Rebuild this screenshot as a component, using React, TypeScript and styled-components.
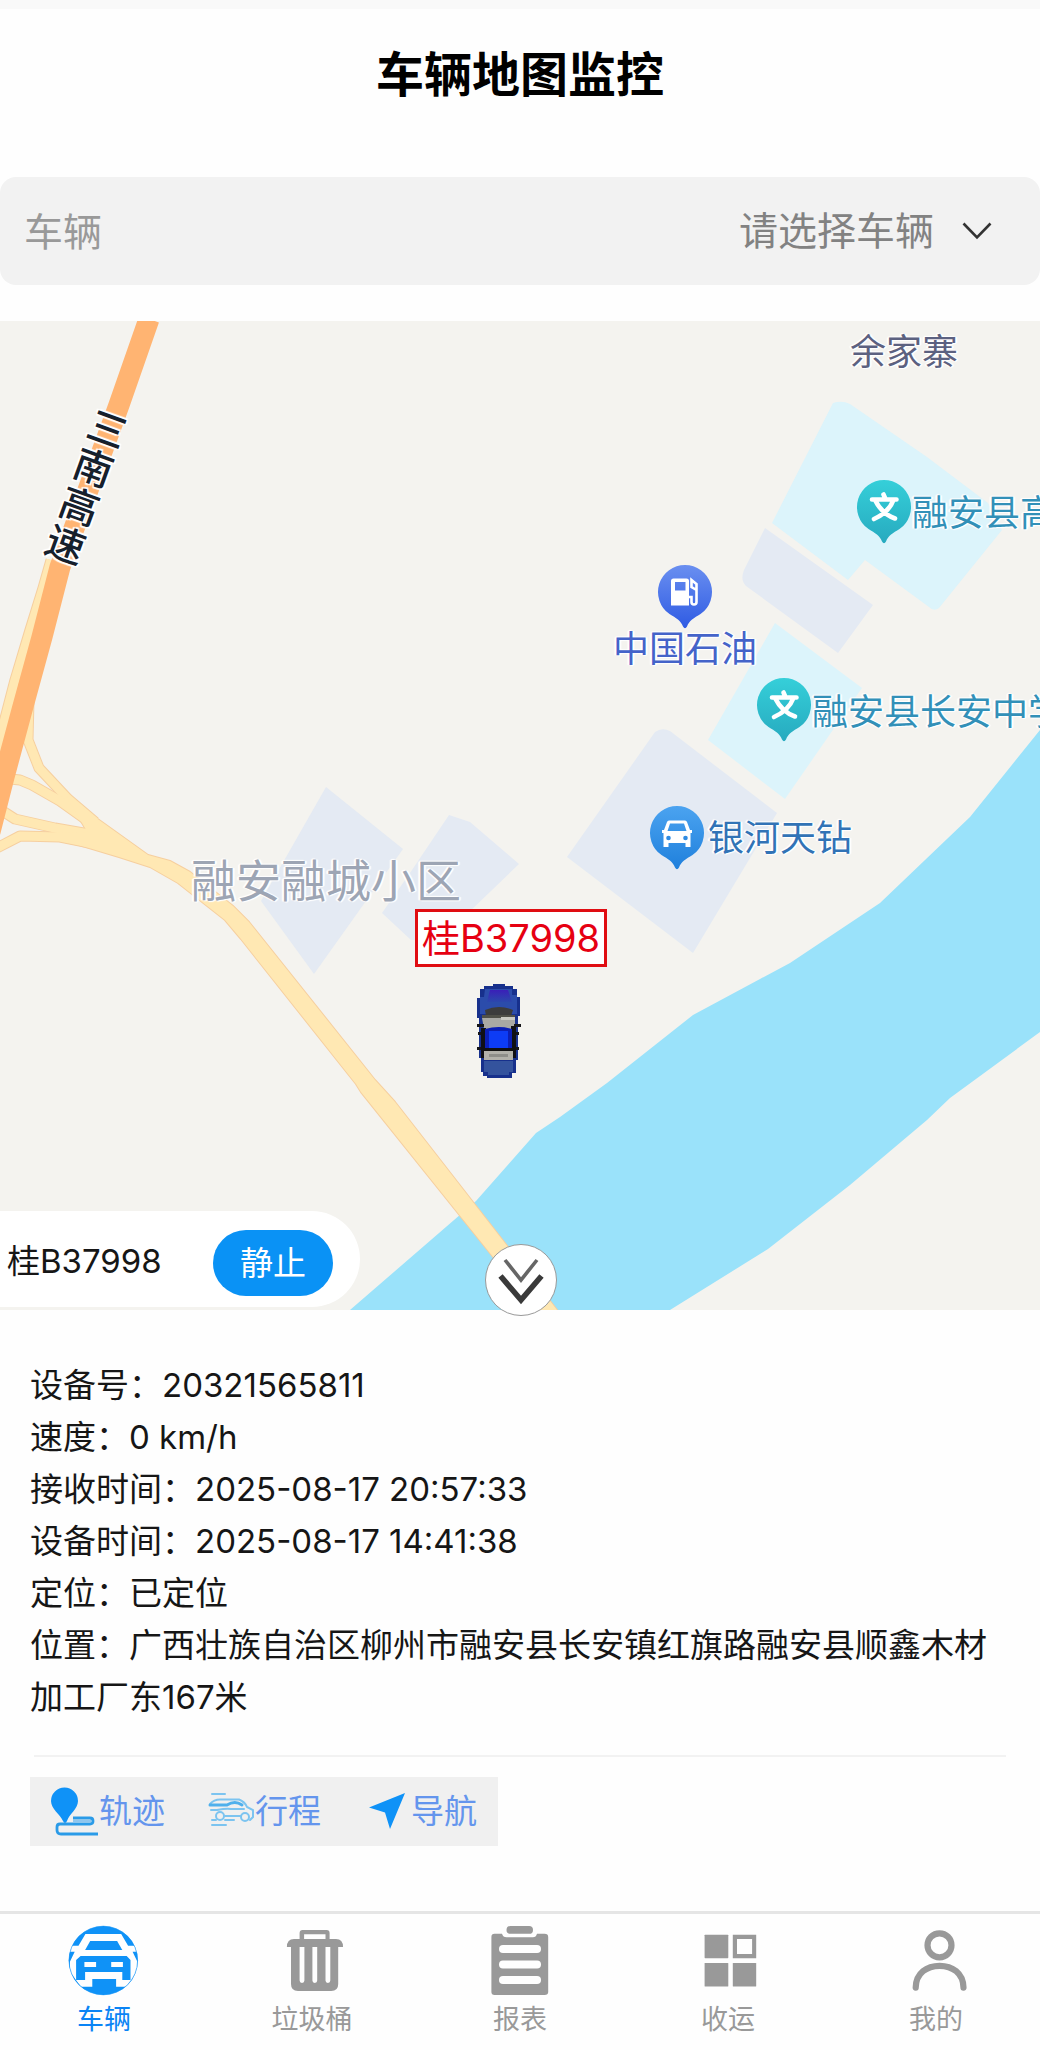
import React from 'react';
import styled, { createGlobalStyle } from 'styled-components';

const GlobalStyle = createGlobalStyle`
  *, *::before, *::after { box-sizing: border-box; }
  body {
    margin: 0;
    background: #fefefe;
    color: #161616;
    font-family: Inter, 'Noto Sans CJK SC', sans-serif;
  }
  button, select { font-family: inherit; }
`;

/* ---------- page ---------- */

const Page = styled.div`
  display: flex;
  flex-direction: column;
  min-height: 100vh;
  overflow-x: hidden;
`;

const Header = styled.header`
  display: flex;
  justify-content: center;
  padding: 30px 0 66px;
  border-top: 9px solid #f9f9f9;
`;

const Title = styled.h1`
  margin: 0;
  font-size: 48px;
  line-height: 72px;
  font-weight: 700;
  color: #000;
`;

const Field = styled.div`
  display: flex;
  align-items: center;
  height: 108px;
  padding: 0 48px 0 24px;
  border-radius: 16px;
  background: #f2f2f2;
  font-size: 39px;
`;

const FieldLabel = styled.label`
  flex: 1;
  padding-bottom: 4px;
  color: #999;
`;

const VehicleSelect = styled.select`
  appearance: none;
  margin: 0 27px 0 0;
  padding: 0;
  border: 0;
  outline: 0;
  background: none;
  color: #828282;
  font-size: 39px;
  line-height: 60px;
`;

/* ---------- map ---------- */

const MAP_W = 1040;
const MAP_H = 989;

const MapArea = styled.section`
  position: relative;
  margin-top: 36px;
  aspect-ratio: ${MAP_W} / ${MAP_H};
`;

const MapCanvas = styled.div`
  position: absolute;
  inset: 0;
  overflow: hidden;
  background: #f4f3ef;
`;

const Terrain = styled.svg`
  display: block;
  width: 100%;
  height: 100%;
`;

const Place = styled.div<{ $x: number; $y: number }>`
  position: absolute;
  left: ${p => (p.$x / MAP_W) * 100}%;
  top: ${p => (p.$y / MAP_H) * 100}%;
`;

const PlaceName = styled.span<{ $color: string; $size?: number }>`
  display: block;
  font-size: ${p => p.$size ?? 36}px;
  line-height: 48px;
  white-space: nowrap;
  color: ${p => p.$color};
  text-shadow: 0 0 2px #fff, 1px 1px 1px #fff, -1px -1px 1px #fff, 2px 0 1px #fff, -2px 0 1px #fff;
`;

const RoadName = styled.div`
  display: flex;
  flex-direction: column;
  width: 40px;
  font-size: 39px;
  font-weight: 500;
  line-height: 41px;
  color: #16202c;
  text-shadow: 0 0 2px #fff, 2px 1px 1px #fff, -2px -1px 1px #fff, 1px -2px 1px #fff, -1px 2px 1px #fff;
  transform: rotate(20deg);
`;

const Plate = styled.div`
  padding: 0 4px;
  border: 3px solid #e00d12;
  background: #fff;
  color: #e60012;
  font-size: 38px;
  line-height: 52px;
  white-space: nowrap;
`;

const StatusPanel = styled.div`
  position: absolute;
  left: 0;
  bottom: 3px;
  display: flex;
  align-items: center;
  justify-content: space-between;
  width: 360px;
  height: 96px;
  padding: 0 27px 0 7px;
  border-radius: 0 48px 48px 0;
  background: #fff;
  font-size: 33px;
`;

const StatusButton = styled.button`
  width: 120px;
  height: 66px;
  margin-top: 8px;
  padding: 0 0 4px;
  border: 0;
  border-radius: 33px;
  background: #0a92f5;
  color: #fff;
  font-size: 33px;
`;

const CollapseButton = styled.button`
  position: absolute;
  left: 50%;
  bottom: -6px;
  display: block;
  width: 72px;
  height: 72px;
  margin-left: -35px;
  padding: 0;
  border: 1px solid #999;
  border-radius: 50%;
  background: #fff;
`;

/* ---------- details ---------- */

const Details = styled.section`
  padding: 49px 30px 65px;
`;

const InfoLine = styled.p`
  margin: 0;
  font-size: 33px;
  line-height: 52px;
`;

const Divider = styled.hr`
  height: 2px;
  margin: 32px 4px 20px;
  border: 0;
  background: #f2f2f2;
`;

const Actions = styled.div`
  display: inline-flex;
  vertical-align: top;
  background: #f0f0f0;
`;

const ActionButton = styled.button`
  display: flex;
  align-items: center;
  justify-content: center;
  width: 156px;
  height: 69px;
  padding: 0;
  border: 0;
  background: none;
  color: #6495ed;
  font-size: 33px;
  line-height: 48px;
  white-space: nowrap;
`;

const ActionText = styled.span`
  padding-bottom: 2px;
`;

/* ---------- tab bar ---------- */

const TabBar = styled.nav`
  display: grid;
  grid-template-columns: repeat(5, 1fr);
  margin-top: auto;
  padding: 11px 0 9px;
  border-top: 3px solid #e5e5e5;
`;

const Tab = styled.a<{ $active?: boolean }>`
  display: flex;
  flex-direction: column;
  align-items: center;
  gap: 2px;
  color: ${p => (p.$active ? '#0a84f5' : '#999')};
  font-size: 27px;
  line-height: 42px;
  text-decoration: none;
`;

/* ---------- drawings ---------- */

const BLUE = '#0f92f7';

const Chevron = () => (
  <svg width="30" height="18" viewBox="0 0 30 18" fill="none" aria-hidden="true">
    <path d="M1.5 1.5 15 15.500 28.500 1.500" stroke="#333" strokeWidth="2.600" />
  </svg>
);

const DoubleChevron = () => (
  <svg width="70" height="70" viewBox="0 0 70 70" fill="none" style={{ display: 'block' }} aria-hidden="true">
    <path d="M19 15 35 35 51 15" stroke="#666" strokeWidth="3.600" />
    <path d="M14.500 31 35 55 55.500 31" stroke="#3a3a3a" strokeWidth="5.600" />
  </svg>
);

type PinKind = 'school' | 'gas' | 'car';

const pinColors: Record<PinKind, [string, string]> = {
  school: ['#35cfd9', '#27aabf'],
  gas: ['#6a8ff0', '#2f5be3'],
  car: ['#4ba3f0', '#1f80dc'],
};

const Pin = ({ kind }: { kind: PinKind }) => {
  const [from, to] = pinColors[kind];
  return (
    <svg width="56" height="66" viewBox="0 0 56 66" style={{ display: 'block' }} aria-hidden="true">
      <defs>
        <linearGradient id={`pin-${kind}`} x1="0" y1="0" x2="0" y2="1">
          <stop offset="0" stopColor={from} />
          <stop offset="1" stopColor={to} />
        </linearGradient>
      </defs>
      <path
        d="M28 1a27 27 0 0 1 15.500 49.100C37 54 32 57 30 62.500Q28 66 26 62.500C24 57 19 54 12.500 50.100A27 27 0 0 1 28 1z"
        fill={`url(#pin-${kind})`}
      />
      {kind === 'school' && (
        <path
          d="M27.500 15.500l1.500 3.500M16 20.500H40.500M19 21C23 29 29 36 39 39.500M37.500 21C34 30 27 36 18 40"
          fill="none" stroke="#fff" strokeWidth="4.600" strokeLinecap="round" strokeLinejoin="round"
        />
      )}
      {kind === 'gas' && (
        <>
          <path fillRule="evenodd" fill="#fff" d="M16.500 14.500H29.500Q32 14.500 32 17V41.500H14V17Q14 14.500 16.500 14.500zM18 18V26.500H28.500V18z" />
          <path d="M32 33h2.500v5q0 2.500 2.500 2.500t2.500-2.500V20L34.500 16v7l5 3" fill="none" stroke="#fff" strokeWidth="2.600" />
        </>
      )}
      {kind === 'car' && (
        <>
          <path
            fillRule="evenodd" fill="#fff"
            d="M20 15.500H36Q37.500 15.500 38 17L41 25H43V28H41.500V42H36.500V38H19.500V42H14.500V28H13V25H15L18 17Q18.500 15.500 20 15.500zM21 18.500 18.500 26H37.500L35 18.500z"
          />
          <circle cx="19.500" cy="33" r="2.300" fill="#2f8be2" />
          <circle cx="36.500" cy="33" r="2.300" fill="#2f8be2" />
        </>
      )}
    </svg>
  );
};

const CarSprite = () => (
  <svg width="46" height="94" viewBox="0 0 46 94" style={{ display: 'block' }} aria-hidden="true">
    <defs>
      <linearGradient id="hood" x1="0" y1="0" x2="0" y2="1">
        <stop offset="0" stopColor="#3a1fb8" />
        <stop offset="1" stopColor="#2b48ac" />
      </linearGradient>
    </defs>
    <path d="M17 0H29V2H37V5H41V13H44V32H42V76H40V89H36V94H11V92H7V88H5V74H3V34H1V14H4V5H8V2H17z" fill="#17308c" />
    <path d="M9 5H36V11H41V30H4V13H8z" fill="#2b4cab" />
    <path d="M14 6H32L36 18H11z" fill="url(#hood)" />
    <path d="M9 26Q23 20 37 26L35 32H10z" fill="#3c3c3c" />
    <path d="M6 31H39V34H6z" fill="#505048" />
    <path d="M6 34H39V45H8z" fill="#a9a9a4" />
    <path d="M25 33H39V36H25z" fill="#c9c9c2" />
    <path d="M1 40H8V43H1zM38 40H45V43H38zM2 48H8V51H2zM38 48H43V51H38zM1 63H8V66H1zM38 63H43V66H38z" fill="#15151a" />
    <path d="M5 44H10V74H5zM35 42H40V74H35z" fill="#101014" />
    <path d="M9 45Q23 41 36 45V66H9z" fill="#0b1fb5" />
    <path d="M13 47H32V64H13z" fill="#0d3cf5" />
    <path d="M9 64H36V68H9z" fill="#111" />
    <path d="M8 67H37V76H8z" fill="#b2b1aa" />
    <path d="M13 70H32V73H13z" fill="#8e8e89" />
    <path d="M8 77H37V88H33V91H12V88H8z" fill="#34539d" />
  </svg>
);

const TrackIcon = () => (
  <svg width="48" height="50" viewBox="0 0 48 50" fill="none" aria-hidden="true">
    <path d="M13.500 0.500A13.500 13.500 0 0 1 27 14C27 22 18 27 16 34Q14 38 12 34C9 27 0 22 0 14A13.500 13.500 0 0 1 13.500 0.500z" fill={BLUE} />
    <path d="M22 31H39Q42 31 42 34T39 37H9Q6 37 6 40V43Q6 47 10 47H47" stroke="#2a9be8" strokeWidth="2.800" />
    <path d="M22 34H40" stroke="#8fc6ee" strokeWidth="2" />
  </svg>
);

const TripIcon = () => (
  <svg width="48" height="50" viewBox="0 0 48 50" fill="none" stroke="#7cc4f0" strokeWidth="2" strokeLinecap="round" aria-hidden="true">
    <path d="M5 7H18" />
    <path d="M3 17Q7 12.500 13 12.500H32Q38 15 40 20L46 23V30L43 33" />
    <path d="M3 18H20Q28 13 35 18" stroke="#4fb0ec" strokeWidth="3" />
    <path d="M4 23H10Q20 21 24 22H37M18 29H34M5 33H9M18 33H27" />
    <circle cx="13" cy="29" r="4" />
    <circle cx="38" cy="30" r="4" />
    <path d="M5 38H19" />
  </svg>
);

const NavigateIcon = () => (
  <svg width="48" height="50" viewBox="0 0 48 50" aria-hidden="true">
    <path d="M42 6 6 20.500 22 25.500 27 42z" fill={BLUE} />
  </svg>
);

const TabSvg = styled.svg.attrs({ viewBox: '0 0 72 72', 'aria-hidden': true })`
  display: block;
  width: 72px;
  height: 72px;
  fill: #999;
`;

const VehicleIcon = () => (
  <TabSvg>
    <clipPath id="disc"><circle cx="35.300" cy="35.500" r="34.500" /></clipPath>
    <g clipPath="url(#disc)">
      <path d="M0 0H72V72H0z" fill={BLUE} />
      <path
        fill="#fefefe"
        d="M-1 20.700H10.500L17.400 9H53.200L60.100 20.700H72V26.700H64.600L69.400 36.700V46.700L58.400 61.700H48.100V54H24.300V61.700H12.900L1.900 46.700V36.700L6.700 26.700H-1z"
      />
      <path d="M22.200 16H49.100L54.300 25H17.100z" fill={BLUE} />
      <path
        fillRule="evenodd" fill={BLUE}
        d="M12.600 31H58.700L62.500 35V55H54.300V47H17.100V55H8.100V35zM16.400 37V42H28.100V37zM43.200 37V42H54.900V37z"
      />
    </g>
    <circle cx="35.300" cy="35.500" r="34.300" fill="none" stroke={BLUE} strokeWidth="0.600" />
  </TabSvg>
);

const TrashIcon = () => (
  <TabSvg>
    <path
      fillRule="evenodd"
      d="M23.600 14V8Q23.600 5 26.600 5H50.600Q53.600 5 53.600 8V14H60Q67 14 67 22H62.200V59Q62.200 66 55.200 66H22Q15 66 15 59V22H10.900Q10.900 14 18 14zM28.100 9.300V14H49.500V9.300z"
    />
    <g fill="#fefefe">
      <path d="M23.600 22H28.400V55.500A2.400 2.400 0 0 1 23.600 55.500zM36.400 22H41.200V55.500A2.400 2.400 0 0 1 36.400 55.500zM49.500 22H54.300V55.500A2.400 2.400 0 0 1 49.500 55.500z" />
    </g>
  </TabSvg>
);

const ReportIcon = () => (
  <TabSvg>
    <rect x="22.500" y="1" width="26.500" height="7.800" rx="3.900" />
    <path d="M10.500 8.700H18Q19 12.300 22.500 12.300H49Q52 12.300 53 8.700H60.500Q64.200 8.700 64.200 12V67Q64.200 70 60.500 70H10.500Q7.400 70 7.400 67V12Q7.400 8.700 10.500 8.700z" />
    <g fill="#fefefe">
      <rect x="15" y="20" width="42" height="8" rx="4" />
      <rect x="15" y="35.500" width="42" height="8" rx="4" />
      <rect x="15" y="51" width="42" height="8" rx="4" />
    </g>
  </TabSvg>
);

const GridIcon = () => (
  <TabSvg>
    <rect x="12.600" y="9.700" width="23.700" height="23.500" rx="0.600" />
    <path fillRule="evenodd" d="M40.800 9.700H64.200V33.200H40.800zM45 14V29H60.100V14z" />
    <rect x="12.600" y="38" width="23.700" height="23.500" rx="0.600" />
    <rect x="40.800" y="38" width="23.400" height="23.500" rx="0.600" />
  </TabSvg>
);

const PersonIcon = () => (
  <TabSvg>
    <g fill="none" stroke="#999" strokeWidth="6.200" strokeLinecap="round">
      <circle cx="39.500" cy="20.300" r="12" />
      <path d="M15.700 62.600C16 48 27 40.800 39.600 40.800S63.200 48 63.500 62.600" />
    </g>
  </TabSvg>
);

const MapDrawing = () => (
  <Terrain viewBox="0 321 1040 989" preserveAspectRatio="none" aria-hidden="true">
    <g fill="#dcf4fb">
      <path d="M833 403Q842 400 850 404L927 457 988 503 1002 530 939 608Q934 612 929 607L865 560 848 580 772 523z" />
      <path d="M775 623 862 688 785 799 708 740z" />
    </g>
    <g fill="#e4eaf3">
      <path d="M765 528 873 605 838 653 746 586Q740 580 744 570z" />
      <path d="M655 732Q662 727 670 731L777 813 693 953 567 857z" />
      <path d="M326 787 403 849 314 974 261 901z" />
      <path d="M449 815 470 822 519 864 440 940H411L382 913 412 870z" />
    </g>
    <path
      fill="#9ae2fa"
      d="M1040 730 970 817 880 903 790 963 760 979 693 1015 607 1083 560 1117 536 1133 476 1201 350 1310H670L768 1249 850 1185 927 1120 950 1098 1040 1032z"
    />
    {[
      { stroke: '#f6cf9f', extra: 2 },
      { stroke: '#ffe8b3', extra: 0 },
    ].map(({ stroke, extra }) => (
      <g key={stroke} fill="none" stroke={stroke} strokeLinejoin="round">
        <path strokeWidth={9 + extra} d="M51 560 43 588 30 630 15 680 2 730-8 775" />
        <path strokeWidth={9 + extra} d="M29 700 28 740 39 768 68 799 95 822" />
        <path strokeWidth={9 + extra} d="M10 779 20 780 32 785 60 801 95 826" />
        <path strokeWidth={9 + extra} d="M1 810 15 819 55 828 95 835" />
        <path strokeWidth={9 + extra} d="M-5 849 20 836 60 837 95 844" />
        <path
          fill={stroke} strokeWidth={extra}
          d="M66 796 81 807 148 855 170 861 190 872 233 906 249 922 375 1080 395 1102 504 1242 557 1310H535L494 1258 361 1092 356 1084 241 939 225 920 178 883 150 867 119 857 79 845 60 841 60 832 88 833z"
        />
      </g>
    ))}
    <path d="M149 319 119 405 60 567 42 637 22 710 4 777-10 832" fill="none" stroke="#ffb472" strokeWidth="21" />
  </Terrain>
);

/* ---------- content ---------- */

const places: { name: string; x: number; y: number; color: string; size?: number }[] = [
  { name: '余家寨', x: 850, y: 7, color: '#5c6180' },
  { name: '融安县高', x: 912, y: 168, color: '#3290b8' },
  { name: '中国石油', x: 613, y: 304, color: '#4463c9' },
  { name: '融安县长安中学', x: 812, y: 367, color: '#3290b8' },
  { name: '银河天钻', x: 708, y: 493, color: '#3173b6' },
  { name: '融安融城小区', x: 191, y: 537, color: '#9da5b4', size: 45 },
];

const pins: { kind: PinKind; x: number; y: number }[] = [
  { kind: 'school', x: 856, y: 158 },
  { kind: 'gas', x: 657, y: 243 },
  { kind: 'school', x: 756, y: 356 },
  { kind: 'car', x: 649, y: 484 },
];

const info: [string, string][] = [
  ['设备号：', '20321565811'],
  ['速度：', '0 km/h'],
  ['接收时间：', '2025-08-17 20:57:33'],
  ['设备时间：', '2025-08-17 14:41:38'],
  ['定位：', '已定位'],
  ['位置：', '广西壮族自治区柳州市融安县长安镇红旗路融安县顺鑫木材加工厂东167米'],
];

const actions = [
  { label: '轨迹', Icon: TrackIcon },
  { label: '行程', Icon: TripIcon },
  { label: '导航', Icon: NavigateIcon },
];

const tabs = [
  { label: '车辆', Icon: VehicleIcon },
  { label: '垃圾桶', Icon: TrashIcon },
  { label: '报表', Icon: ReportIcon },
  { label: '收运', Icon: GridIcon },
  { label: '我的', Icon: PersonIcon },
];

export default function App() {
  return (
    <Page lang="zh-CN">
      <GlobalStyle />
      <Header>
        <Title>车辆地图监控</Title>
      </Header>

      <Field>
        <FieldLabel htmlFor="vehicle">车辆</FieldLabel>
        <VehicleSelect id="vehicle" defaultValue="">
          <option value="">请选择车辆</option>
        </VehicleSelect>
        <Chevron />
      </Field>

      <MapArea>
        <MapCanvas>
          <MapDrawing />
          <Place $x={67} $y={84}>
            <RoadName>
              {[...'三南高速'].map(c => <span key={c}>{c}</span>)}
            </RoadName>
          </Place>
          {places.map(p => (
            <Place key={p.name} $x={p.x} $y={p.y}>
              <PlaceName $color={p.color} $size={p.size}>{p.name}</PlaceName>
            </Place>
          ))}
          {pins.map(p => (
            <Place key={`${p.x}-${p.y}`} $x={p.x} $y={p.y}>
              <Pin kind={p.kind} />
            </Place>
          ))}
          <Place $x={415} $y={588}><Plate>桂B37998</Plate></Place>
          <Place $x={476} $y={663}><CarSprite /></Place>
        </MapCanvas>
        <StatusPanel>
          <span>桂B37998</span>
          <StatusButton type="button">静止</StatusButton>
        </StatusPanel>
        <CollapseButton type="button" aria-label="收起">
          <DoubleChevron />
        </CollapseButton>
      </MapArea>

      <Details>
        {info.map(([label, value]) => (
          <InfoLine key={label}>{label + value}</InfoLine>
        ))}
        <Divider />
        <Actions>
          {actions.map(({ label, Icon }) => (
            <ActionButton key={label} type="button">
              <Icon />
              <ActionText>{label}</ActionText>
            </ActionButton>
          ))}
        </Actions>
      </Details>

      <TabBar>
        {tabs.map(({ label, Icon }, i) => (
          <Tab key={label} href="#" $active={i === 0}>
            <Icon />
            {label}
          </Tab>
        ))}
      </TabBar>
    </Page>
  );
}
